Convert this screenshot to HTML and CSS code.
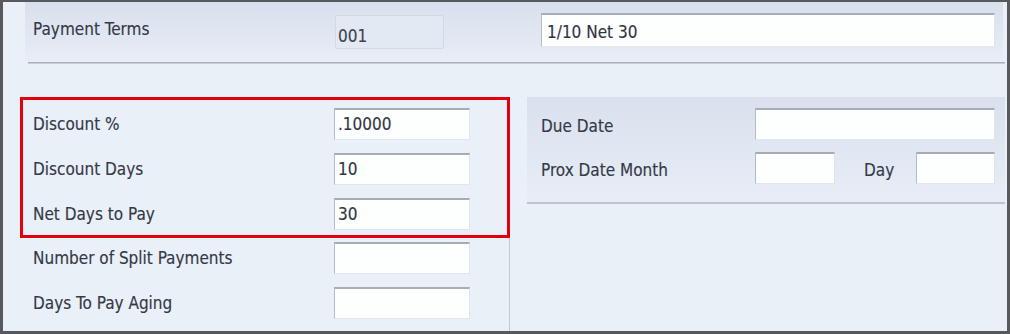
FILE: index.html
```html
<!DOCTYPE html>
<html>
<head>
<meta charset="utf-8">
<link rel="stylesheet" href="styles.css">
</head>
<body>
<div class="frame">
  <div class="top">
    <div class="lbl pt">Payment Terms</div>
    <div class="ro">001</div>
    <div class="field wide">1/10 Net 30</div>
  </div>
  <div class="rule"></div>
  <div class="lower">
    <div class="left">
      <div class="hl">
        <div class="row"><div class="lbl">Discount %</div><div class="field">.10000</div></div>
        <div class="row"><div class="lbl">Discount Days</div><div class="field">10</div></div>
        <div class="row"><div class="lbl">Net Days to Pay</div><div class="field">30</div></div>
      </div>
      <div class="rest">
        <div class="row"><div class="lbl">Number of Split Payments</div><div class="field"></div></div>
        <div class="row"><div class="lbl">Days To Pay Aging</div><div class="field"></div></div>
      </div>
    </div>
    <div class="right">
      <div class="panel">
        <div class="rrow"><div class="lbl rl">Due Date</div><div class="field due"></div></div>
        <div class="rrow"><div class="lbl rl">Prox Date Month</div><div class="field sm"></div><div class="lbl day">Day</div><div class="field sm2"></div></div>
      </div>
    </div>
  </div>
</div>
</body>
</html>
```

FILE: styles.css
```css
html, body {
  margin: 0;
  padding: 0;
  background: #eaf0f8;
}
body {
  font-family: "DejaVu Sans Condensed", "DejaVu Sans", sans-serif;
  font-stretch: condensed;
  font-size: 17px;
  color: #343947;
  -webkit-text-stroke: 0.15px #343947;
}
.frame {
  width: 1010px;
  height: 334px;
  box-sizing: border-box;
  border-style: solid;
  border-color: #58595d;
  border-width: 2px 3px 3px 3px;
  background: #eaf0f8;
  display: flex;
  flex-direction: column;
  overflow: hidden;
}
.top {
  margin-left: 22px;
  margin-right: 4px;
  height: 59px;
  flex: none;
  background: linear-gradient(#d8e0ed, #e8edf6);
  display: flex;
  align-items: flex-start;
}
.lbl {
  line-height: 1;
  white-space: nowrap;
}
.pt {
  margin-left: 8px;
  width: 302px;
  margin-top: 19px;
}
.ro {
  margin-top: 13px;
  width: 109px;
  height: 34px;
  box-sizing: border-box;
  background: #e3e9f2;
  border: 1px solid #d4dae4;
  border-radius: 2px;
  padding: 12px 0 0 2px;
  line-height: 1;
  color: #3d4250;
}
.field {
  box-sizing: border-box;
  height: 32px;
  background: #fdfefe;
  border-top: 2px solid #a8acb4;
  border-left: 1px solid #b6bac2;
  border-right: 1px solid #dfe3ea;
  border-bottom: 1px solid #e2e6ed;
  display: flex;
  align-items: center;
  padding-left: 3px;
  line-height: 1;
  color: #30343e;
}
.wide {
  margin-left: 97px;
  margin-top: 11px;
  width: 454px;
  height: 34px;
  padding-left: 5px;
  padding-top: 3px;
}
.rule {
  flex: none;
  margin: 1px 2px 0 25px;
  height: 1px;
  background: #c8ced8;
  border-top: 1px solid #aab0ba;
}
.lower {
  flex: 1;
  display: flex;
  padding-top: 33px;
}
.left {
  width: 507px;
  flex: none;
  box-sizing: border-box;
  border-right: 1px solid #c3c9d2;
}
.hl {
  margin-left: 17px;
  width: 490px;
  box-sizing: border-box;
  border: 3px solid #e2000f;
  padding: 8px 0 5px 0;
  display: grid;
  row-gap: 13px;
}
.row {
  display: grid;
  grid-template-columns: 311px 136px;
  align-items: center;
  height: 32px;
}
.row .lbl {
  padding-left: 10px;
}
.rest {
  margin-left: 20px;
  padding-top: 4px;
  display: grid;
  row-gap: 13px;
}
.right {
  flex: 1;
  padding: 0 2px 0 17px;
}
.panel {
  background: linear-gradient(#d9e1ee, #e8edf6);
  border-bottom: 2px solid #bec4cd;
  padding: 11px 0 18px 14px;
  display: grid;
  row-gap: 12px;
}
.rrow {
  display: flex;
  align-items: center;
  height: 32px;
}
.rl {
  width: 214px;
  padding-top: 4px;
}
.due {
  width: 240px;
}
.sm {
  width: 80px;
}
.day {
  margin-left: 29px;
  width: 52px;
  padding-top: 4px;
}
.sm2 {
  width: 79px;
}
```
